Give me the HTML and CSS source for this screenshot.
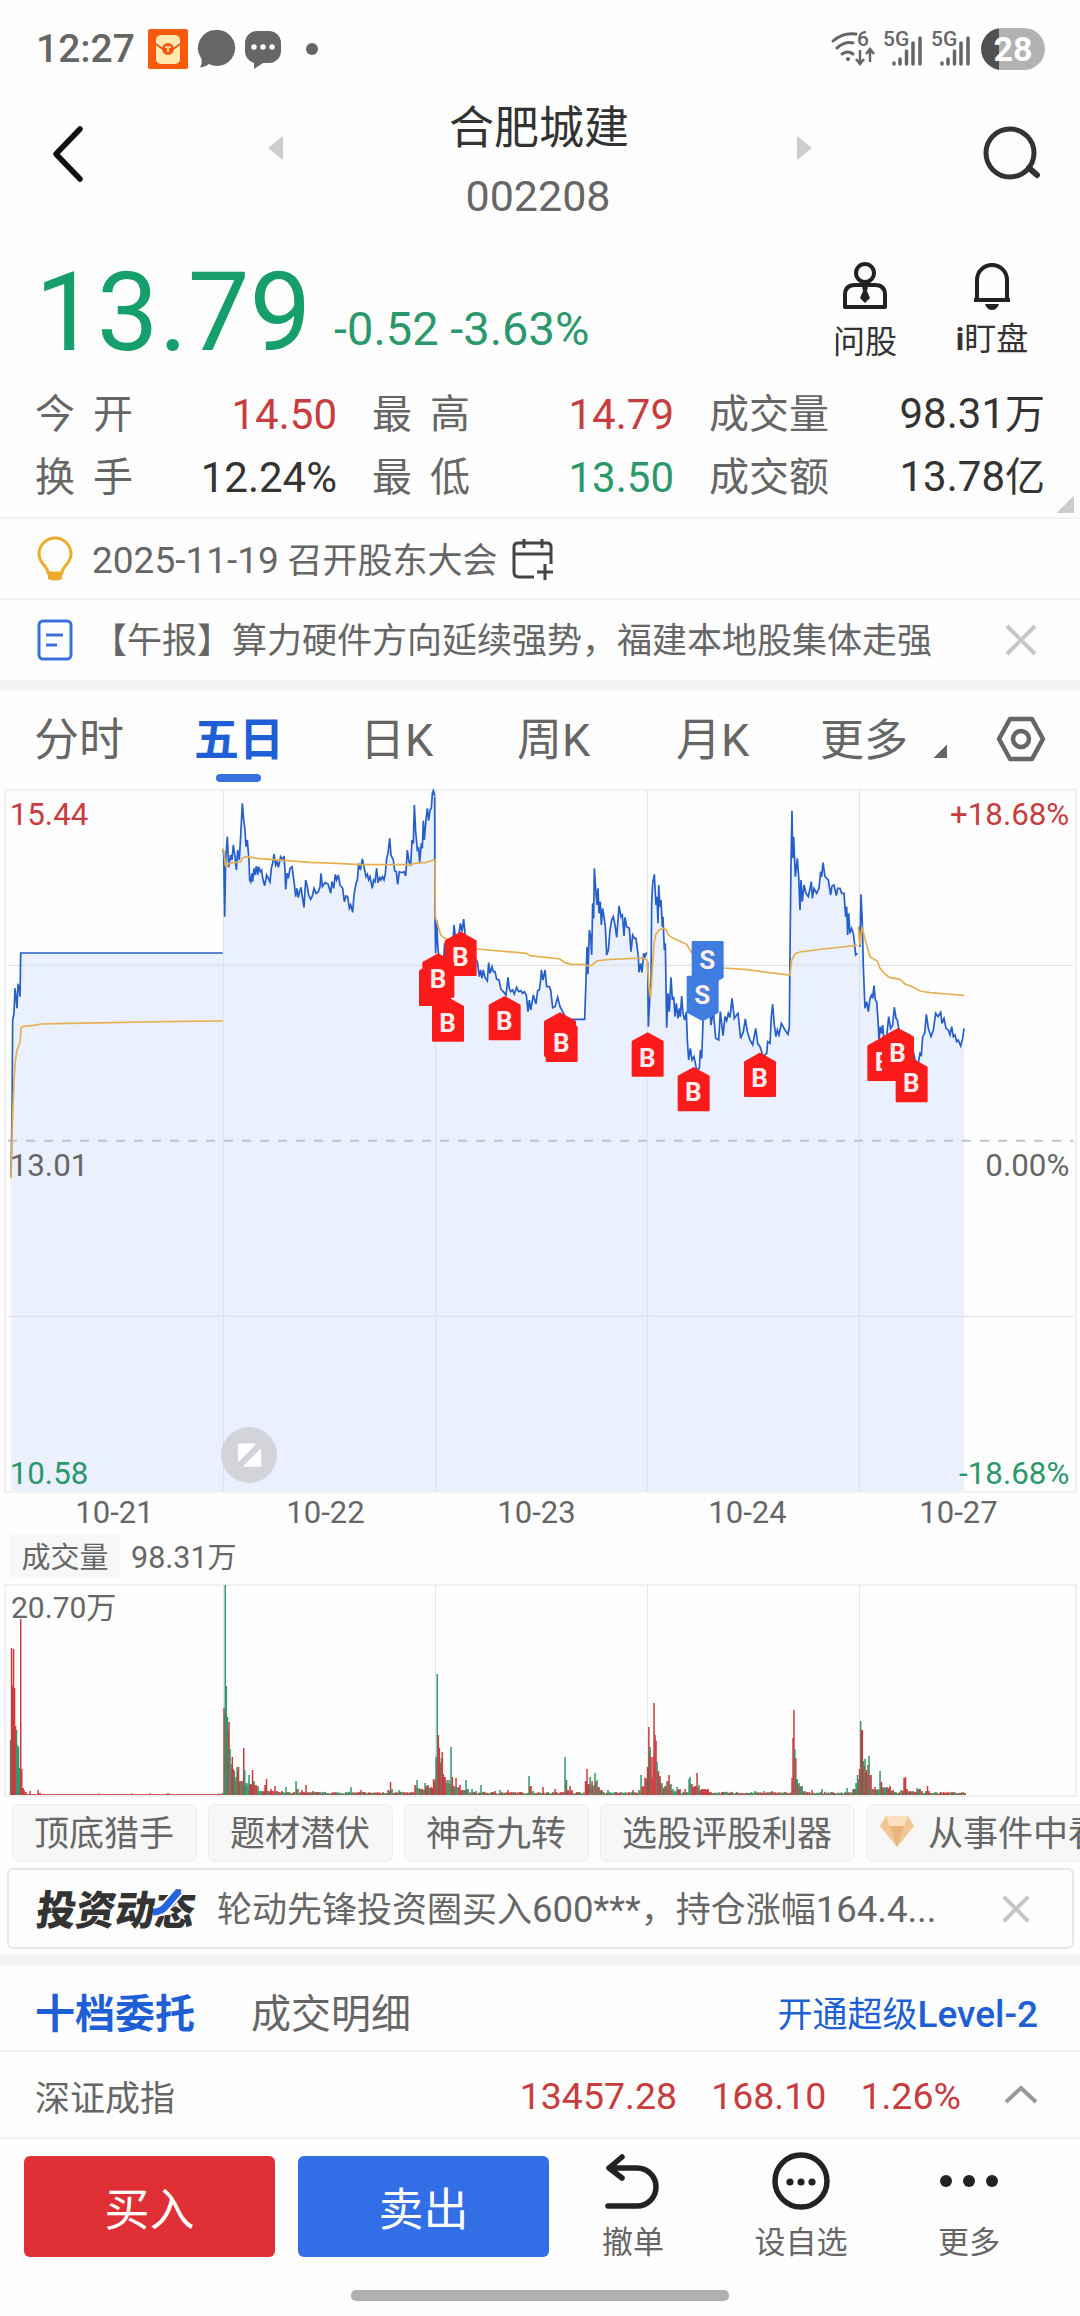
FILE: index.html
```html
<!DOCTYPE html>
<html lang="zh-CN">
<head>
<meta charset="utf-8">
<title>合肥城建 002208</title>
<link rel="stylesheet" href="styles.css">
</head>
<body>
<header class="status">
  <div class="status-left">
    <span class="clock">12:27</span>
    <svg width="40" height="40" viewBox="0 0 40 40"><rect width="40" height="40" rx="2" fill="#f8590d"/><rect x="8" y="6" width="24" height="29" rx="5" fill="#ffe9ae"/><path d="M8 15l8 6M32 15l-8 6" stroke="#ee5a16" stroke-width="2"/><circle cx="20" cy="20" r="6" fill="#ee5a16"/><path d="M17 18h6M20 18v5" stroke="#ffe9ae" stroke-width="1.5"/></svg>
    <svg width="38" height="40" viewBox="0 0 38 40"><path d="M19 1a18 18 0 1 1-7 34q-5 4-9 3q3-4 1-9A18 18 0 0 1 19 1z" fill="#666"/></svg>
    <svg width="38" height="40" viewBox="0 0 38 40"><path d="M13 2h12a12 12 0 0 1 12 12v8a12 12 0 0 1-12 12h-6l-9 6v-6A12 12 0 0 1 1 22v-8A12 12 0 0 1 13 2z" fill="#666"/><g fill="#fff"><circle cx="10" cy="18" r="2.7"/><circle cx="19" cy="18" r="2.7"/><circle cx="28" cy="18" r="2.7"/></g></svg>
    <i class="dot"></i>
  </div>
  <div class="status-right">
    <svg width="44" height="36" viewBox="0 0 44 36"><g fill="none" stroke="#666" stroke-width="3" stroke-linecap="round"><path d="M2 10Q12 1 25 3M6 17q8-7 16-5M11 23q6-4 11 0"/><path d="M29 19v13m-4-4l4 5 4-5M39 31V19m-4 4l4-5 4 5" stroke-width="2.5" stroke-linecap="butt"/></g><circle cx="17" cy="28" r="2" fill="#666"/><text x="26" y="15" class="net">6</text></svg>
    <svg width="40" height="36" viewBox="0 0 40 36"><text x="0" y="15" class="net">5G</text><g stroke="#666" stroke-width="3.500" stroke-linecap="round"><path d="M11 32v1M17 28v5M23.500 20v13M30 12v21M37 7v26"/></g></svg>
    <svg width="40" height="36" viewBox="0 0 40 36"><text x="0" y="15" class="net">5G</text><g stroke="#666" stroke-width="3.500" stroke-linecap="round"><path d="M11 32v1M17 28v5M23.500 20v13M30 12v21M37 7v26"/></g></svg>
    <span class="battery">28</span>
  </div>
</header>

<nav class="title-bar">
  <svg class="back" width="36" height="60" viewBox="0 0 36 60"><path d="M31 5L7 30l24 25" fill="none" stroke="#111" stroke-width="5.500" stroke-linecap="round" stroke-linejoin="round"/></svg>
  <svg class="arrow" width="16" height="24" viewBox="0 0 16 24"><path d="M15 0v24L0 12z" fill="#ccc"/></svg>
  <div class="title"><h1>合肥城建</h1><p>002208</p></div>
  <svg class="arrow" width="16" height="24" viewBox="0 0 16 24"><path d="M1 0v24l15-12z" fill="#ccc"/></svg>
  <svg class="search" width="60" height="56" viewBox="0 0 60 56"><circle cx="28" cy="28" r="24" fill="none" stroke="#333" stroke-width="5"/><path d="M47 43l8 7" stroke="#333" stroke-width="6" stroke-linecap="round"/></svg>
</nav>

<section class="quote">
  <div class="price-row">
    <strong class="price">13.79</strong><span class="change">-0.52 -3.63%</span>
    <div class="tool ask"><svg width="46" height="48" viewBox="0 0 46 48"><g fill="none" stroke="#222" stroke-width="4"><circle cx="23" cy="11" r="9"/><path d="M3 45V33q0-10 10-10h20q10 0 10 10v12z" stroke-linejoin="round"/></g><path d="M20 24h6l-1 5 3 7-5 5-5-5 3-7z" fill="#222"/></svg><span>问股</span></div>
    <div class="tool watch"><svg width="40" height="48" viewBox="0 0 40 48"><path d="M5 38V18a15 15 0 0 1 30 0v20M2 38h36" fill="none" stroke="#222" stroke-width="4"/><path d="M13 42h14q-2 6-7 6t-7-6z" fill="#222"/></svg><span><b>i</b>盯盘</span></div>
  </div>
  <div class="stats">
    <div><span class="wide">今开</span><em class="up">14.50</em></div>
    <div><span class="wide">最高</span><em class="up">14.79</em></div>
    <div><span>成交量</span><em>98.31<small>万</small></em></div>
    <div><span class="wide">换手</span><em>12.24%</em></div>
    <div><span class="wide">最低</span><em class="down">13.50</em></div>
    <div><span>成交额</span><em>13.78<small>亿</small></em></div>
  </div>
  <i class="corner"></i>
</section>

<section class="notice event">
  <svg width="38" height="44" viewBox="0 0 38 44"><path d="M12 35c0-7-9-9-9-19a16 16 0 0 1 32 0c0 10-9 12-9 19z" fill="none" stroke="#edab2e" stroke-width="3"/><path d="M12 36h14v5q-7 3-14 0z" fill="#edab2e"/></svg>
  <p><span class="date">2025-11-19</span> 召开股东大会</p>
  <svg width="42" height="42" viewBox="0 0 42 42"><g fill="none" stroke="#444" stroke-width="3"><path d="M22 38H7q-5 0-5-5V8q0-4 4-4h29q4 0 4 4v17M2 15h37M12 0v9M30 0v9M25 33h16M33 25v16"/></g></svg>
</section>
<section class="notice">
  <svg width="38" height="42" viewBox="0 0 38 42"><rect x="3" y="2" width="32" height="38" rx="4" fill="none" stroke="#3b70d8" stroke-width="3"/><path d="M10 16h17M10 26h11" stroke="#3b70d8" stroke-width="3"/></svg>
  <p>【午报】算力硬件方向延续强势，福建本地股集体走强</p>
  <svg class="close" width="32" height="32" viewBox="0 0 32 32"><path d="M2 2l28 28M30 2L2 30" stroke="#c6c6c6" stroke-width="4"/></svg>
</section>
<div class="band"></div>

<nav class="periods">
  <span>分时</span><span class="active">五日</span><span>日K</span><span>周K</span><span>月K</span><span class="more">更多</span><i class="fold"></i>
  <svg width="50" height="46" viewBox="0 0 50 46"><path d="M14 3h22l11 20-11 20H14L3 23z" fill="none" stroke="#666" stroke-width="4.500" stroke-linejoin="round"/><circle cx="25" cy="23" r="8" fill="none" stroke="#666" stroke-width="4.500"/></svg>
</nav>

<section class="chart">
  <svg id="price" width="1080" height="708" viewBox="0 18 3240 2124"></svg>
  <div class="dates"><span>10-21</span><span>10-22</span><span>10-23</span><span>10-24</span><span>10-27</span></div>
  <div class="indicator"><span class="pill">成交量</span><span class="total">98.31<small>万</small></span></div>
  <svg id="volume" width="1080" height="216" viewBox="0 0 1080 216"></svg>
</section>

<div class="chips">
  <span>顶底猎手</span><span>题材潜伏</span><span>神奇九转</span><span>选股评股利器</span>
  <span class="gem"><svg width="34" height="32" viewBox="0 0 34 32"><path d="M6 0h22l6 10-17 21L0 10z" fill="#f2c795"/><path d="M6 0h22l-4 10H10z" fill="#fbe1c1"/><path d="M10 10h14l-7 21z" fill="#e9b57e"/></svg>从事件中看</span>
</div>

<section class="feed">
  <svg class="feed-logo" width="164" height="46" viewBox="0 0 164 46"><g transform="skewX(-8)"><text x="6" y="38" textLength="158" lengthAdjust="spacingAndGlyphs">投资动态</text></g><path d="M119 25q9 0 14-7l12-14" fill="none" stroke="#fefefe" stroke-width="11"/><path d="M119 25q9 0 14-7l12-14" fill="none" stroke="#2563e0" stroke-width="7"/></svg>
  <p>轮动先锋投资圈买入<span>600***</span>，持仓涨幅<span>164.4...</span></p>
  <svg class="close" width="28" height="28" viewBox="0 0 32 32"><path d="M2 2l28 28M30 2L2 30" stroke="#c6c6c6" stroke-width="4.500"/></svg>
</section>
<div class="band second"></div>

<nav class="depth-tabs"><b>十档委托</b><span>成交明细</span><a>开通超级<strong>Level-2</strong></a></nav>
<section class="index-row"><span>深证成指</span><em>13457.28</em><em>168.10</em><em>1.26%</em>
  <svg width="34" height="20" viewBox="0 0 34 20"><path d="M2 17L17 3l15 14" fill="none" stroke="#999" stroke-width="4"/></svg>
</section>

<footer class="actions">
  <button class="buy">买入</button><button class="sell">卖出</button>
  <div><svg width="60" height="60" viewBox="0 0 60 60"><path d="M19 6L6 17l13 10M6 17h28a19 19 0 0 1 0 38H5" fill="none" stroke="#222" stroke-width="5.500" stroke-linecap="round" stroke-linejoin="round"/></svg><span>撤单</span></div>
  <div><svg width="60" height="60" viewBox="0 0 60 60"><circle cx="30" cy="30" r="26" fill="none" stroke="#222" stroke-width="5.500"/><g fill="#222"><circle cx="19" cy="31" r="3.600"/><circle cx="30" cy="31" r="3.600"/><circle cx="41" cy="31" r="3.600"/></g></svg><span>设自选</span></div>
  <div><svg width="60" height="60" viewBox="0 0 60 60"><g fill="#222"><circle cx="7" cy="30" r="6"/><circle cx="30" cy="30" r="6"/><circle cx="53" cy="30" r="6"/></g></svg><span>更多</span></div>
</footer>
<div class="home"></div>
<script src="chart.js"></script>
</body>
</html>
```
FILE: styles.css
```css
* { box-sizing: border-box; margin: 0; padding: 0; }
body {
  width: 1080px; height: 2316px; overflow: hidden; background: #fefefe; color: #666;
  font-family: Roboto, "Noto Sans CJK SC", sans-serif;
  display: flex; flex-direction: column;
}
body > * { flex: none; }
svg { display: block; flex: none; overflow: visible; }
em { font-style: normal; }
i { display: block; flex: none; }

.status { height: 98px; padding: 0 35px 0 36px; display: flex; justify-content: space-between; align-items: center; }
.status-left, .status-right { display: flex; align-items: center; }
.clock { font-size: 39px; font-weight: 500; width: 112px; line-height: 40px; }
.status-left svg + svg { margin-left: 9px; }
.dot { width: 12px; height: 12px; border-radius: 6px; background: #666; margin-left: 24px; }
.status-right svg { margin-right: 8px; position: relative; left: -2px; }
.net { font: 500 21px Roboto, sans-serif; fill: #666; }
.battery {
  width: 64px; height: 42px; border-radius: 21px; color: #fff; text-align: center;
  font-size: 34px; line-height: 42px; font-weight: 700;
  background: linear-gradient(90deg, #505050 18px, #b2b2b2 18px);
}

.title-bar { height: 132px; display: flex; padding-left: 49px; }
.back { margin-top: 26px; }
.title-bar .arrow { margin-top: 38px; }
.back + .arrow { margin-left: 183px; }
.title { width: 180px; margin: 0 166px 0 166px; text-align: center; color: #333; white-space: nowrap; }
.title h1 { font-size: 45px; font-weight: 400; line-height: 60px; padding-top: 1px; margin-left: -2px; }
.title p { font-size: 43px; line-height: 50px; margin-top: 12px; margin-left: -4px; color: #666; }
.title + .arrow { margin-left: 0; }
.search { margin: 27px 0 0 170px; }

.quote { height: 289px; position: relative; border-bottom: 2px solid #f2f2f2; }
.price-row { height: 150px; display: flex; padding-left: 35px; }
.price { width: 299px; font-size: 110px; font-weight: 400; color: #169f6b; line-height: 120px; margin-top: 23px; }
.change { width: 491px; font-size: 47px; color: #2a986c; line-height: 54px; margin-top: 72px; }
.tool { width: 80px; display: flex; flex-direction: column; align-items: center; font-size: 32px; line-height: 40px; color: #333; white-space: nowrap; }
.tool svg { margin-top: 32px; }
.tool span { margin-top: 12px; }
.watch { margin-left: 47px; }
.watch span { margin-top: 9px; }
.stats { display: grid; grid-template-columns: 302px 302px 336px; column-gap: 35px; padding-left: 35px; grid-auto-rows: 63px; padding-top: 3px; }
.stats div { display: flex; justify-content: space-between; align-items: center; font-size: 40px; line-height: 60px; }
.stats .wide { letter-spacing: 18px; }
.stats em { font-size: 42px; color: #333; }
.stats small { font-size: 40px; }
.stats .up { color: #c73c3f; }
.stats .down { color: #2a986c; }
.corner { position: absolute; right: 6px; bottom: 4px; width: 17px; height: 17px; background: linear-gradient(135deg, transparent 50%, #ccc 50%); }

.notice { height: 81px; border-bottom: 2px solid #f2f2f2; display: flex; align-items: center; padding-left: 36px; font-size: 35px; }
.notice p { margin-left: 18px; margin-right: 14px; white-space: nowrap; line-height: 50px; padding-top: 3px; }
.event p { padding-top: 5px; }
.event svg { margin-top: 2px; }
.notice .date { font-size: 37px; }
.notice + .notice { border: 0; height: 80px; }
.notice .close { margin-left: 59px; }
.band { height: 11px; background: #f4f4f4; }

.periods { height: 95px; display: flex; align-items: center; font-size: 45px; padding-left: 34px; padding-top: 4px; }
.periods span { line-height: 60px; width: 160px; }
.periods .active { color: #1f5fd6; font-weight: 700; position: relative; }
.periods .active::after { content: ""; position: absolute; left: 22px; top: 63px; width: 45px; height: 8px; border-radius: 4px; background: #3771de; }
.periods span:nth-child(3) { width: 157px; margin-left: 6px; }
.periods span:nth-child(4) { width: 159px; }
.periods span:nth-child(5) { width: 144px; }
.periods .more { width: 114px; font-size: 44px; }
.fold { width: 13px; height: 13px; margin-top: 22px; background: linear-gradient(135deg, transparent 50%, #666 50%); }
.periods svg { margin-left: 49px; margin-top: -3px; }

.chart text { font-family: Roboto, "Noto Sans CJK SC", sans-serif; }
.dates { height: 38px; padding-left: 9px; display: flex; font-size: 31px; line-height: 38px; text-align: center; }
.dates span { width: 211px; }
.indicator { height: 50px; padding: 2px 10px 0; display: flex; font-size: 29px; }
.pill { width: 110px; height: 44px; line-height: 48px; background: #f7f7f7; border-radius: 4px; text-align: center; }
.total { margin-left: 11px; font-size: 30.500px; line-height: 48px; }
.total small { font-size: 29px; }

.chips { height: 66px; padding: 6px 0 0 12px; display: flex; gap: 11px; overflow: hidden; }
.chips span { flex: none; height: 58px; border: 1px solid #eee; border-radius: 7px; background: #f7f7f7; padding: 0 21px; font-size: 35px; line-height: 60px; white-space: nowrap; width: 185px; }
.chips span:nth-child(4) { width: 255px; }
.chips .gem { width: 330px; display: flex; padding-left: 13px; }
.gem svg { margin: 11px 14px 0 0; }

.feed { margin: 4px 6px 0 7px; height: 81px; border: 2px solid #e6e6e6; border-radius: 6px; display: flex; align-items: center; padding-left: 25px; font-size: 35px; }
.feed-logo { margin-top: 2px; }
.feed-logo text { font: 900 41px "Noto Sans CJK SC", sans-serif; fill: #333; }
.feed p { margin-left: 19px; width: 723px; line-height: 50px; white-space: nowrap; padding-top: 4px; }
.feed p span { font-size: 36.500px; }
.feed .close { margin-left: 62px; }
.band.second { margin-top: 5px; height: 12px; }

.depth-tabs { height: 86px; border-bottom: 2px solid #f2f2f2; display: flex; align-items: center; font-size: 40px; line-height: 60px; padding: 14px 42px 0 35px; }
.depth-tabs b { color: #1f5fd6; width: 216px; }
.depth-tabs a { color: #1f5fd6; font-size: 35px; margin-left: auto; }
.depth-tabs strong { font-weight: 500; font-size: 37px; }
.index-row { height: 87px; border-bottom: 2px solid #f2f2f2; display: flex; align-items: center; padding: 2px 42px 0 35px; font-size: 35px; }
.index-row span { margin-right: auto; }
.index-row em { color: #c73c3f; font-size: 37.500px; margin-left: 34px; }
.index-row svg { margin-left: 43px; margin-top: -2px; }

.actions { height: 140px; padding: 17px 0 0 24px; display: flex; }
.actions button { width: 251px; height: 101px; border: 0; border-radius: 6px; color: #fff; font: 400 45px "Noto Sans CJK SC", sans-serif; line-height: 101px; background: #df3035; margin-right: 23px; }
.actions .sell { background: #326ee5; margin-right: 0; }
.actions div { width: 168px; display: flex; flex-direction: column; align-items: center; font-size: 31px; line-height: 40px; }
.actions div svg { margin-top: -5px; }
.actions div span { margin-top: 12px; }
.home { width: 378px; height: 11px; border-radius: 5px; background: #b0b0b0; margin: 11px 0 0 351px; }
```
FILE: chart.js
```js
const NS = 'http://www.w3.org/2000/svg';
function el(parent, name, attrs, text) {
  const node = document.createElementNS(NS, name);
  for (const key in attrs) node.setAttribute(key, attrs[key]);
  if (text) node.textContent = text;
  parent.appendChild(node);
  return node;
}
function shift(points, dx) {
  return points.trim().split(/\s+/).map(p => { const [x, y] = p.split(','); return (+x + dx) + ',' + y; }).join(' ');
}

// Intraday price of each session
const prices = [
  shift('33,1190 36,1000 38,720 42,700 45,625 48,650 51,685 54,615 58,620 60,650 62,519 668,519', 0),
  shift('668,210 671,220 674,410 677,240 682,170 686,262 692,225 696,240 700,195 705,230 709,270 713,210 718,240 723,150 727,70 731,120 735,150 738,200 742,180 747,240 749,300 752,306 756,280 758,305 762,265 765,285 769,258 773,285 776,260 781,275 785,270 788,295 794,317 800,285 805,295 810,306 814,265 818,250 822,222 827,255 831,245 835,262 842,230 848,240 852,228 855,270 857,328 861,280 865,295 870,265 876,260 880,290 884,320 887,350 891,325 895,353 899,335 903,322 907,350 912,382 917,300 922,320 926,345 932,358 937,348 942,325 948,340 955,335 960,320 963,280 967,320 975,308 984,312 988,325 992,340 996,305 1001,325 1006,283 1010,300 1015,285 1020,315 1028,325 1033,365 1038,348 1043,350 1048,385 1052,375 1058,397 1062,345 1068,310 1072,300 1076,250 1081,270 1087,237 1092,260 1098,290 1102,283 1106,300 1110,290 1117,325 1121,300 1125,305 1130,265 1134,308 1139,293 1143,300 1147,290 1152,300 1156,280 1160,235 1164,220 1169,175 1173,225 1180,240 1184,272 1189,275 1193,313 1198,275 1205,278 1212,275 1217,288 1222,210 1227,245 1232,258 1236,180 1240,190 1243,75 1247,155 1252,210 1256,205 1259,247 1264,190 1267,205 1270,122 1273,180 1278,120 1282,85 1286,122 1290,90 1294,85 1297,40 1300,32 1304,48', 0),
  shift('44,50 45,415 47,520 50,420 53,490 57,540 70,550 74,490 80,560 98,500 102,435 106,470 116,470 121,430 126,455 131,417 136,470 168,540 172,545 178,590 182,570 186,595 190,570 195,592 202,603 206,548 210,580 216,560 220,575 225,575 230,598 237,600 243,628 250,635 258,645 264,592 268,625 272,635 278,630 283,642 290,622 296,635 302,632 308,640 313,635 319,645 324,695 328,660 332,690 340,645 348,672 353,632 358,630 362,600 364,570 369,600 375,570 380,620 388,620 392,630 398,683 405,680 413,652 420,680 428,695 440,718 494,718 498,600 501,500 504,583 508,450 512,470 515,525 518,370 521,415 523,265 528,340 531,375 534,325 537,400 541,365 544,435 548,385 552,410 556,440 560,525 565,510 570,450 575,420 580,410 585,435 590,472 597,378 603,410 607,405 612,468 615,412 620,440 628,445 633,515 638,465 643,475 648,475 655,530 657,577 662,550 666,577 671,520 675,530 680,517', 1260),
  shift('683,545 685,740 690,640 693,600 695,370 698,310 703,283 708,375 711,350 714,430 716,315 720,380 723,360 727,440 729,410 733,510 736,490 740,743 744,640 748,695 753,592 757,660 761,650 765,710 769,670 774,715 778,685 781,710 785,648 789,700 794,720 799,695 802,780 806,840 811,805 816,840 822,830 830,870 838,865 841,810 845,835 850,700 870,700 873,735 880,690 887,775 896,780 901,695 909,767 915,710 920,722 925,700 930,712 936,655 943,715 950,705 954,700 962,775 970,755 976,717 982,755 990,780 998,795 1007,745 1013,790 1020,800 1030,830 1040,820 1043,785 1050,790 1054,710 1058,673 1063,735 1068,770 1072,750 1077,765 1084,730 1095,750 1104,763 1108,740 1110,520 1113,250 1116,92 1118,235 1121,170 1126,290 1132,235 1136,290 1140,390 1143,300 1147,365 1152,315 1158,340 1165,350 1174,305 1177,355 1182,325 1190,340 1197,325 1202,275 1205,290 1209,248 1215,290 1225,300 1232,345 1236,318 1242,315 1249,347 1253,325 1260,325 1265,340 1272,340 1277,410 1280,380 1283,465 1286,400 1290,460 1295,445 1300,460 1303,485 1307,525 1312,520', 1260),
  shift('477,440 480,500 483,343 487,430 490,560 495,685 500,665 505,695 510,655 515,645 518,655 522,617 526,660 530,665 534,720 537,780 541,740 545,760 548,735 552,780 560,770 566,710 572,745 578,735 583,682 588,715 592,720 597,750 630,765 645,840 655,850 660,820 664,825 668,770 674,760 679,703 685,745 693,770 700,750 707,700 714,710 722,697 726,730 732,715 738,745 745,750 750,765 755,740 760,770 765,765 770,785 775,780 782,798 788,775 792,745', 2100)
];
// Running average price
const averages = [
  shift('33,1195 36,1080 40,950 45,850 51,810 57,795 60,788 63,745 68,740 100,736 125,732 200,730 340,728 420,726 550,724 668,723', 0),
  shift('668,205 672,215 676,255 680,262 686,250 700,248 722,246 728,234 737,230 770,235 850,241 930,247 1010,250 1080,254 1230,254 1245,250 1280,247 1300,240 1305,240 1306,410 1312,430 1322,465 1334,475 1430,507 1580,520 1590,527 1680,537 1695,548 1715,553 1752,553 1760,557 1775,556 1790,543 1820,539 1930,534 1941,540 1947,620 1952,655 1957,570 1962,490 1968,462 1978,450 1988,445 1998,448 2005,465 2020,475 2060,493 2075,518 2110,555 2172,564 2240,569 2300,577 2370,585 2375,540 2385,522 2400,516 2470,507 2572,496', 0),
  shift('475,440 480,495 484,455 488,445 493,470 500,495 510,530 522,538 532,543 540,565 555,582 568,592 600,598 615,612 640,622 660,633 690,638 740,642 792,646', 2100)
];

const chart = document.getElementById('price');
const thin = { 'vector-effect': 'non-scaling-stroke', fill: 'none' };
const all = prices.join(' ');
el(chart, 'polygon', { points: '33,2134 ' + all + ' 2892,2134', fill: '#eaf0fe' });
el(chart, 'rect', { x: 15, y: 29, width: 3213, height: 2106, stroke: '#f0f0f0', 'stroke-width': 2, ...thin });
for (const y of [556, 1609]) el(chart, 'path', { d: `M24 ${y}H3220`, stroke: '#d9dde6', 'stroke-width': 1, ...thin });
for (const x of [671, 1307, 1943, 2578]) el(chart, 'path', { d: `M${x} 30V2134`, stroke: '#dbdfe9', 'stroke-width': 1, ...thin });
el(chart, 'path', { d: 'M24 1082H3220', stroke: '#bfc3cd', 'stroke-width': 2, 'stroke-dasharray': '9 9', ...thin });
for (const p of prices) el(chart, 'polyline', { points: p, stroke: '#265fc9', 'stroke-width': 1.7, ...thin });
for (const p of averages) el(chart, 'polyline', { points: p, stroke: '#e5b052', 'stroke-width': 1.7, ...thin });

// Trade markers: x of the tip, y of the top, type
const marks = [[1305, 545, ''], [1382, 455, 'B'], [1315, 520, 'B'], [1344, 652, 'B'], [1514, 648, 'B'], [1680, 697, ''], [1685, 713, 'B'], [1943, 757, 'B'], [2081, 861, 'B'], [2280, 818, 'B'], [2123, 483, 'S'], [2108, 587, 'S'], [2650, 770, 'B'], [2694, 744, 'B'], [2735, 834, 'B']];
for (const [x, y, t] of marks) {
  const sell = t === 'S';
  const d = sell ? `M${x - 45} ${y + 3}h90v106l-45 24l-45 -24z` : `M${x} ${y + 3}l45 25v102h-90v-102z`;
  const c = sell ? '#3f7ee0' : '#fb1b1b';
  el(chart, 'path', { d, fill: c, stroke: c, 'stroke-width': 6, 'stroke-linejoin': 'round' });
  if (t) el(chart, 'text', { x: x - 1, y: y + (sell ? 84 : 103), 'font-size': 78, 'font-weight': 700, fill: '#ffecec', 'text-anchor': 'middle' }, t);
}

const labels = [
  [24, 134, '15.44', '#c73c3f'], [24, 1188, '13.01', '#666'], [24, 2111, '10.58', '#2a986c'],
  [3208, 134, '+18.68%', '#c73c3f'], [3208, 1188, '0.00%', '#666'], [3208, 2111, '-18.68%', '#2a986c']
];
for (const [x, y, t, fill] of labels) el(chart, 'text', { x: x > 99 ? x : x + 5, y, fill, 'font-size': 94, 'text-anchor': x > 99 ? 'end' : 'start' }, t);
el(chart, 'circle', { cx: 747, cy: 2025, r: 84, fill: '#d2d4d9' });
el(chart, 'path', { d: 'M716 1993h48l-48 48zM781 2010v48h-48z', fill: '#fff', stroke: '#fff', 'stroke-width': 5, 'stroke-linejoin': 'round' });

// Volume: x, height and colour (r up, g down)
const volume = `10.5,55g 11.5,147r 13.5,146r 14.5,107r 15.5,69r 16.5,65g 17.5,50g 18.5,48g 19.5,27g 20.7,176r 21.7,26r 23,7r 24,5r 26,3r 30,4r 38,5r 40,2r
224,87r 225.2,210g 226.3,109g 227.5,78g 229,73r 230,46g 231,31g 232.3,38r 233.3,26r 234.3,24g 236,18g 237,28g 238.5,28r 240,14r 242,14r 243.7,47r 244.7,25g 246,12g 248,12g 249,20g 250.5,11r 252.5,25r 254,14g 256,10r 258,9g 260,4g 262,4g 265,10r 266.5,16r 268,4g 271,6r 273,4r 275,9r 277,4r 282,4r 286,8g 288,3g 294,3r 296,14g 298,6g 302,5r 306,10r 309,3r 313,4r 351,8g 361,5r 388,5r 390.5,13r 392,6g 399,5g 415,10r 417,15g 419,7g 422,6r 425,12g 428,10r 431,8r 433.5,16r
436,38g 437.2,121g 438.3,60r 439.3,47r 440.3,32r 441.3,37g 442.3,43r 443.3,21r 445,18r 447,15g 449,15g 451,48g 452.3,18r 454,9r 456,17r 458,8g 460,10r 463,5r 466,15g 468,6g 472,6g 476,4g 481,10g 484,3r 495,4r 500,5g 508,5r 529,19g 531,9r 533,4g
543,8r 555,6r 565,38g 566.5,15g 568,5r 570,9r 572,5r 585.5,14r 587,26r 588.5,11r 590,18g 592,14r 594,10g 595,22g 597,15g 599,8r 602,5r 604,3g 608,5g 633,5r 639,5g 641,20g 643,9r 645,17r
647.5,28r 648.8,68r 650,48g 651,38r 652,18r 653,38r 654,92r 655,60r 656,54r 657,33g 658.5,24r 660,19r 662,12g 665,9g 667,14r 669,20r 671,11g 673,6g 675,4g 677,8g 680,6r 685,6r 687,3g 689,16g 690,18g 692,11r 695,9r 697,22r 699,10g 702,6r 705,6r 708,6r 711,3g 755,4g 764,4g 772,4r
792,17r 793,57r 793.9,85r 794.8,46g 795.7,37r 797,16g 799,12g 802,9g 805,4g 812,5r 822,6g 847,7g 853,6g 856,12g 857.5,20g
859.5,26r 860.6,74g 862.3,65r 863.5,34g 865,36g 866.5,25r 868,30r 869,39g 871,20r 873,6r 875,8r 878,6g 880,24g 881.5,13r 884,8g 887,8r 890,9r 893,5r 896,3g 901,5g 904,17r 905.5,18r 907,6r 910,4r 913,4g 917,7g 920,6r 922,4r 926,4g 927.5,9r 929,4r 932,2r 935,3g 941,3r 960,2g 965,2r`;
const bars = volume.trim().split(/\s+/).map(v => { const [x, h] = v.split(','); return [+x, parseFloat(h), h.slice(-1)]; });
const vol = document.getElementById('volume');
const tint = { r: '#ce3a3d', g: '#35966d' };
el(vol, 'rect', { x: 5, y: 3, width: 1071, height: 211, fill: 'none', stroke: '#f0f0f0', 'stroke-width': 2 });
for (const x of [223.5, 435.5, 647.5, 859.5]) el(vol, 'path', { d: `M${x} 3V213`, stroke: '#e6e8ea' });
const bar = (x, h, c) => el(vol, 'rect', { x: x - .7, y: 213 - h, width: 1.5, height: h, fill: tint[c] });
let seed = 7;
const rnd = () => (seed = seed * 16807 % 2147483647) / 2147483647;
bars.forEach(([x, h, c], i) => {
  bar(x, h, c);
  const next = bars[i + 1];
  if (!next) return;
  const near = next[0] - x < 3.1;
  for (let p = x + .88; p < next[0] - .3; p += .88) {
    if (near) bar(p, Math.min(h, next[1]) * (.75 + rnd() * .25), rnd() > .5 ? 'r' : 'g');
    else if (p < 222) bar(p, rnd() > .96 ? 1.6 : .7, 'r');
    else bar(p, 1 + rnd() * 2.2, rnd() > .5 ? 'r' : 'g');
  }
});
el(vol, 'text', { x: 11, y: 36, fill: '#666', 'font-size': 30 }, '20.70万');
```
